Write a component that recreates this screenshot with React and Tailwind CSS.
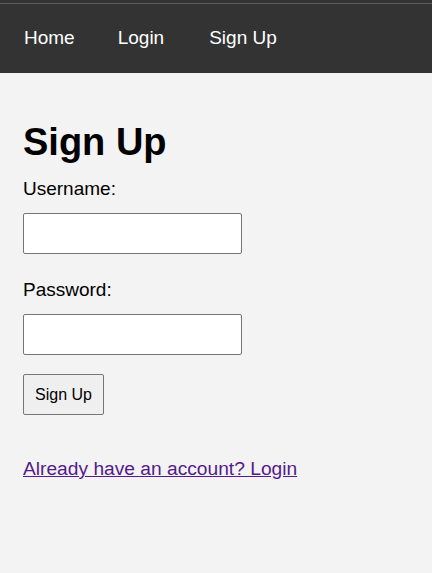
import { useState } from 'react';

export default function App() {
  const [username, setUsername] = useState('');
  const [password, setPassword] = useState('');

  const handleSubmit = (e) => {
    e.preventDefault();
  };

  return (
    <div className="min-h-[573px] bg-[#f3f3f3] font-['Liberation_Sans',Arial,sans-serif] text-black">
      <nav className="h-[73px] bg-[#333333] border-t-[3px] border-[#333333] relative">
        <div className="absolute top-0 left-0 right-0 h-px bg-[#5a5a5a]"></div>
        <ul className="flex items-center h-[70px] pl-[24px] text-[19px] leading-[22px] text-white">
          <li className="mr-[43px]"><a href="#">Home</a></li>
          <li className="mr-[45px]"><a href="#">Login</a></li>
          <li><a href="#">Sign Up</a></li>
        </ul>
      </nav>

      <main className="pt-[47px] px-[23px]">
        <h1 className="text-[38px] leading-[44px] font-bold mb-[14px]">Sign Up</h1>
        <form onSubmit={handleSubmit}>
          <label htmlFor="username" className="block text-[19px] leading-[22px] mb-[13px]">
            Username:
          </label>
          <input
            id="username"
            type="text"
            value={username}
            onChange={(e) => setUsername(e.target.value)}
            className="block w-[219px] h-[41px] bg-white border border-[#767676] rounded-[2px] px-2 text-base"
          />
          <label htmlFor="password" className="block text-[19px] leading-[22px] mt-[25px] mb-[13px]">
            Password:
          </label>
          <input
            id="password"
            type="password"
            value={password}
            onChange={(e) => setPassword(e.target.value)}
            className="block w-[219px] h-[41px] bg-white border border-[#767676] rounded-[2px] px-2 text-base"
          />
          <button
            type="submit"
            className="block mt-[19px] h-[41px] px-[11px] bg-[#efefef] border border-[#767676] rounded-[2px] text-[16px] leading-[18px]"
          >
            Sign Up
          </button>
        </form>
        <p className="mt-[43px] text-[19.2px] leading-[22px]">
          <a href="#" className="text-[#551a8b] underline">Already have an account? Login</a>
        </p>
      </main>
    </div>
  );
}
